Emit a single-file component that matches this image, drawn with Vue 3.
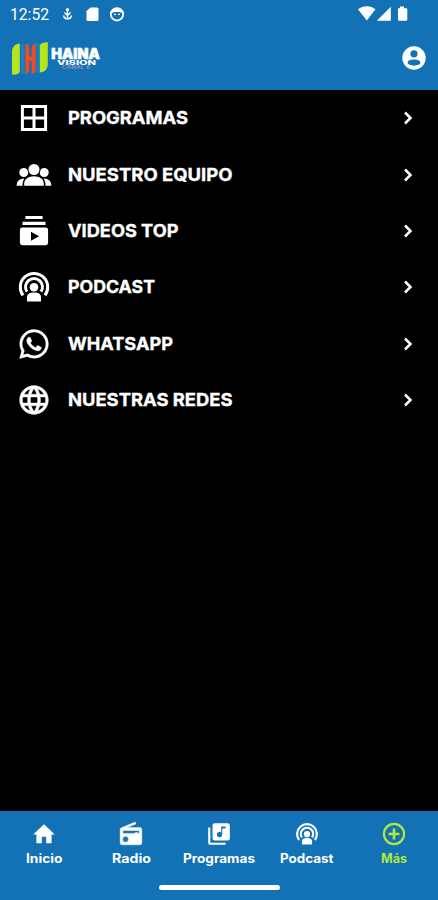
<script setup>
const rows = [
  { icon: 'window', label: 'PROGRAMAS', width: 120 },
  { icon: 'group', label: 'NUESTRO EQUIPO', width: 164.5 },
  { icon: 'videos', label: 'VIDEOS TOP', width: 110.5 },
  { icon: 'podcast', label: 'PODCAST', width: 87 },
  { icon: 'whatsapp', label: 'WHATSAPP', width: 105 },
  { icon: 'globe', label: 'NUESTRAS REDES', width: 164.5 },
]
const tabs = [
  { icon: 'home', label: 'Inicio', width: 36.5 },
  { icon: 'radio', label: 'Radio', width: 39 },
  { icon: 'music', label: 'Programas', width: 72 },
  { icon: 'podcast', label: 'Podcast', width: 53.5 },
  { icon: 'plus', label: 'Más', width: 26, active: true },
]
</script>

<template>
  <div class="screen">
    <svg class="symbols" aria-hidden="true">
      <symbol id="window" viewBox="0 0 36 36">
        <path d="M6.400 6.400h23.200v23.200H6.400zM18 6.400v23.200M6.400 18h23.200" fill="none" stroke="currentColor" stroke-width="3" />
      </symbol>
      <symbol id="group" viewBox="0 0 36 36">
        <circle cx="7.800" cy="15.500" r="4.500" /><circle cx="28.200" cy="15.500" r="4.500" />
        <path d="M.7 28.800c-.3-4.500 2.800-7.500 7.800-7.400-1.500 2-2 4-2 7.400zM35.300 28.800c.3-4.500-2.800-7.500-7.800-7.400 1.500 2 2 4 2 7.400z" />
        <circle cx="18" cy="12.500" r="6.500" fill="#000" /><circle cx="18" cy="12.500" r="5.500" />
        <path d="M8.200 28.800v-2.200c0-4.600 4.600-7.300 9.800-7.300s9.800 2.700 9.800 7.300v2.200z" />
      </symbol>
      <symbol id="videos" viewBox="0 0 36 36">
        <path d="M9.400 3h17.200v3H9.400zM6.500 8.800h23v3.100h-23z" />
        <path fill-rule="evenodd" d="M6.300 14.500h23.400a2.400 2.400 0 0 1 2.400 2.400v12.900a2.400 2.400 0 0 1-2.400 2.400H6.300a2.400 2.400 0 0 1-2.400-2.400V16.900a2.400 2.400 0 0 1 2.400-2.400zM15 18.700v9l8-4.500z" />
      </symbol>
      <symbol id="podcast" viewBox="0 0 36 36">
        <g fill="none" stroke="currentColor" stroke-width="3">
          <path d="M7 26.300a13.700 13.700 0 1 1 22 0" />
          <path d="M11 22.700a8.500 8.500 0 1 1 14 0" />
        </g>
        <circle cx="18" cy="18.200" r="4.300" />
        <path d="M11 32.500v-4.200c0-3.600 3-4.700 7-4.700s7 1.100 7 4.700v4.200z" />
      </symbol>
      <symbol id="whatsapp" viewBox="-.5 -.5 25 25">
        <path stroke="currentColor" stroke-width=".35" d="M12.040 2C6.580 2 2.130 6.450 2.130 11.910c0 1.750.46 3.450 1.320 4.950L2.050 22l5.250-1.380a9.900 9.900 0 0 0 4.740 1.210c5.460 0 9.910-4.450 9.910-9.910A9.900 9.900 0 0 0 12.040 2zm0 1.670a8.240 8.240 0 1 1-4.190 15.330l-.3-.17-3.120.82.83-3.040-.2-.32A8.240 8.240 0 0 1 12.040 3.670zM8.530 7.330c-.16 0-.43.06-.66.31-.22.25-.87.860-.87 2.070 0 1.220.89 2.390 1 2.560.14.17 1.760 2.670 4.250 3.730.59.270 1.050.42 1.410.53.59.190 1.130.160 1.560.100.48-.070 1.460-.600 1.670-1.180.21-.580.21-1.070.15-1.180-.070-.100-.230-.160-.480-.270-.250-.140-1.470-.740-1.690-.820-.230-.080-.370-.120-.560.120-.160.250-.640.820-.780.990-.150.170-.290.190-.530.070-.260-.130-1.060-.390-2-1.230-.740-.660-1.230-1.470-1.380-1.720-.120-.240-.010-.390.110-.500.110-.110.270-.290.370-.440.130-.140.170-.250.250-.410.080-.170.040-.310-.020-.430-.060-.110-.560-1.350-.770-1.840-.200-.480-.400-.420-.560-.430z" />
      </symbol>
      <symbol id="globe" viewBox="-.5 -.5 25 25">
        <path stroke="currentColor" stroke-width=".25" d="M11.990 2C6.470 2 2 6.480 2 12s4.470 10 9.990 10C17.520 22 22 17.520 22 12S17.520 2 11.990 2zm6.930 6h-2.950c-.32-1.250-.78-2.450-1.380-3.560 1.840.63 3.370 1.910 4.330 3.560zM12 4.040c.83 1.200 1.480 2.530 1.910 3.960h-3.820c.43-1.430 1.080-2.760 1.910-3.960zM4.260 14C4.100 13.360 4 12.690 4 12s.1-1.360.26-2h3.380c-.08.66-.14 1.320-.14 2s.06 1.340.14 2zm.82 2h2.950c.32 1.250.78 2.450 1.380 3.560-1.840-.63-3.370-1.900-4.330-3.560zm2.950-8H5.080c.96-1.660 2.490-2.930 4.330-3.560C8.810 5.550 8.350 6.750 8.030 8zM12 19.960c-.83-1.200-1.480-2.530-1.910-3.960h3.820c-.43 1.430-1.080 2.760-1.910 3.960zM14.340 14H9.660c-.09-.66-.16-1.320-.16-2s.07-1.350.16-2h4.680c.09.65.16 1.320.16 2s-.07 1.340-.16 2zm.25 5.560c.6-1.110 1.060-2.310 1.380-3.560h2.950c-.96 1.650-2.490 2.930-4.330 3.560zM16.360 14c.08-.66.14-1.320.14-2s-.06-1.340-.14-2h3.380c.16.64.26 1.310.26 2s-.1 1.360-.26 2z" />
      </symbol>
      <symbol id="home" viewBox="0 0 24 24"><path d="M10 20.500v-6h4v6h5v-8h3L12 3 2 12.500h3v8z" /></symbol>
      <symbol id="radio" viewBox="0 0 24 24">
        <path fill-rule="evenodd" stroke="currentColor" stroke-width=".4" d="M3.240 6.150C2.510 6.430 2 7.170 2 8v12a2 2 0 0 0 2 2h16a2 2 0 0 0 2-2V8a2 2 0 0 0-2-2H8.300l8.260-3.340L15.880 1zM7 19.500a2.700 2.700 0 1 1 0-5.400 2.700 2.700 0 0 1 0 5.400zm12.500-8h-1.500v-1h-2v1H4.500V8.700h15z" />
      </symbol>
      <symbol id="music" viewBox="0 0 24 24">
        <path fill-rule="evenodd" d="M20 2H8a2 2 0 0 0-2 2v12a2 2 0 0 0 2 2h12a2 2 0 0 0 2-2V4a2 2 0 0 0-2-2zm-2 5h-3v5.500a2.500 2.500 0 1 1-1-2V5h4zM4 6H2v14a2 2 0 0 0 2 2h14v-2H4z" />
      </symbol>
      <symbol id="plus" viewBox="0 0 24 24">
        <g fill="none" stroke="currentColor" stroke-width="2"><circle cx="12" cy="12" r="9.300" /><path d="M12 7v10M7 12h10" stroke-width="2.400" /></g>
      </symbol>
    </svg>

    <header class="header">
      <div class="status">
        <svg class="clock" width="40" height="16"><text x="0" y="13" textLength="39" lengthAdjust="spacingAndGlyphs">12:52</text></svg>
        <svg class="notices" width="70" height="18" viewBox="58 5 70 18">
          <path d="M67.500 9v9M64.500 12.500l3 3 3-3M63.500 15.500c1 4.500 7 4.500 8 0" fill="none" stroke="currentColor" stroke-width="1.400" />
          <circle cx="67.500" cy="9.800" r="1.700" opacity=".85" />
          <path d="M90.500 7.500H97a1.500 1.500 0 0 1 1.500 1.500v10.500A1.500 1.500 0 0 1 97 21h-9a1.500 1.500 0 0 1-1.500-1.500V11z" />
          <circle cx="117" cy="14.300" r="6.200" fill="none" stroke="currentColor" stroke-width="1.800" />
          <path d="M111.500 13.500c0-4 2.500-5.500 5.500-5.500s5.500 1.500 5.500 5.500l-2.500-1.500h-6z" />
          <path d="M114 14.300h2M118 14.300h2" stroke="currentColor" stroke-width="1.200" />
        </svg>
        <svg class="system" width="52" height="18" viewBox="357 5 52 18">
          <path d="M358 9.200c5-4 12.500-4 17.500 0l-8.700 11.300zM390.800 6.800v14h-14zM398 8.200h2V6.500h4v1.700h2c.8 0 1.300.5 1.300 1.300v10c0 .8-.5 1.300-1.300 1.300h-6.700c-.8 0-1.300-.5-1.300-1.300z" />
        </svg>
      </div>
      <div class="brand-row">
        <svg class="logo" width="92" height="36" viewBox="11 41 92 36">
          <path class="lime" d="M12 74.500V52c0-5 3-8 7.800-8.500V72c-1 2-4 3-7.800 2.500z" />
          <path class="lime" d="M39.800 72.500V45c1.500-2.200 4.500-3 8-2.800V64c0 5-3 8-8 8.500z" />
          <path class="blue" d="M21 44h3.500v30H21zM36.500 43H39v30h-2.500z" />
          <path class="red" d="M25.300 43.500c3 .3 4 2 4 5V56l2.400 1v-8.500c0-3 1.300-4.500 4-4.500v26c0 2.500-1.300 3.800-4 3.800V61.500l-2.400-1V69c0 3-1 4.700-4 4.700z" />
          <text class="haina" x="51.300" y="58.800" textLength="48.500" lengthAdjust="spacingAndGlyphs">HAINA</text>
          <text class="vision" x="57" y="64.500" textLength="39" lengthAdjust="spacingAndGlyphs">VISION</text>
          <text class="canal" x="62" y="69.300" textLength="28" lengthAdjust="spacingAndGlyphs">CANAL 6</text>
        </svg>
        <svg class="account" width="24" height="24" viewBox="0 0 24 24">
          <path fill-rule="evenodd" d="M12 .3a11.700 11.700 0 1 0 0 23.400A11.700 11.700 0 0 0 12 .3zm0 3.900a3.600 3.600 0 1 1 0 7.200 3.600 3.600 0 0 1 0-7.200zm0 9.300c3.500 0 6.400 1.300 6.400 3.100S15.500 19.700 12 19.700s-6.400-1.300-6.400-3.100 2.900-3.100 6.400-3.100z" />
        </svg>
      </div>
    </header>

    <main class="menu">
      <div v-for="row in rows" :key="row.label" class="row">
        <svg class="row-icon" width="36" height="36"><use :href="'#' + row.icon" /></svg>
        <svg class="row-label" width="180" height="24"><text x="0" y="18.300" :textLength="row.width" lengthAdjust="spacingAndGlyphs">{{ row.label }}</text></svg>
        <svg class="chevron" width="10" height="16" viewBox="0 0 10 16"><path d="M2 2.500L7.500 8 2 13.500" /></svg>
      </div>
    </main>

    <footer class="footer">
      <nav class="tabs">
        <div v-for="tab in tabs" :key="tab.label" class="tab" :class="{ active: tab.active }">
          <svg class="tab-icon" width="26" height="26"><use :href="'#' + tab.icon" /></svg>
          <svg class="tab-label" :width="tab.width" height="18"><text x="0" y="14" :textLength="tab.width" lengthAdjust="spacingAndGlyphs">{{ tab.label }}</text></svg>
        </div>
      </nav>
      <div class="home-bar"></div>
    </footer>
  </div>
</template>

<style>
body { margin: 0; background: #000; }
</style>

<style scoped>
.screen { display: flex; flex-direction: column; width: 438px; height: 900px; overflow: hidden; background: #000; color: #fff; font-family: Inter, "Liberation Sans", sans-serif; }
.symbols { display: none; }
svg { display: block; flex: none; fill: currentColor; overflow: visible; }
.header { height: 90px; flex: none; background: #1272b5; }
.status { display: flex; align-items: flex-start; height: 36px; box-sizing: border-box; padding: 5px 29px 0 10px; }
.clock { margin-top: 2px; font: 400 16px Roboto, sans-serif; }
.notices { margin-left: 8px; }
.system { margin-left: auto; }
.brand-row { display: flex; justify-content: space-between; padding: 5px 12.500px 0 11px; }
.account { margin-top: 5px; }
.lime { fill: #b5e51d; }
.blue { fill: #1680cc; }
.red { fill: #ef4b24; }
.haina { font-size: 14px; font-weight: 900; stroke: #fff; stroke-width: .6px; }
.vision { font-size: 6.300px; font-weight: 800; }
.canal { font-size: 4.800px; font-weight: 700; fill: #8b91ae; }
.menu { flex: 1; }
.row { display: flex; align-items: center; height: 56.350px; padding: 0 25px 0 16px; }
.row-label { margin-left: 15.800px; font-size: 17.700px; font-weight: 700; stroke: #fff; stroke-width: .35px; }
.chevron { margin-left: auto; fill: none; stroke: #fff; stroke-width: 2.500px; }
.footer { display: flex; flex-direction: column; align-items: center; height: 89px; flex: none; background: #1272b5; }
.tabs { display: grid; grid-template-columns: repeat(5, 1fr); width: 100%; height: 73.500px; }
.tab { display: flex; flex-direction: column; align-items: center; padding-top: 9.500px; }
.tab-label { margin-top: 2px; font-size: 12.500px; font-weight: 700; }
.active { color: #b2e83a; }
.home-bar { width: 121px; height: 5px; border-radius: 3px; background: #fff; }
</style>
